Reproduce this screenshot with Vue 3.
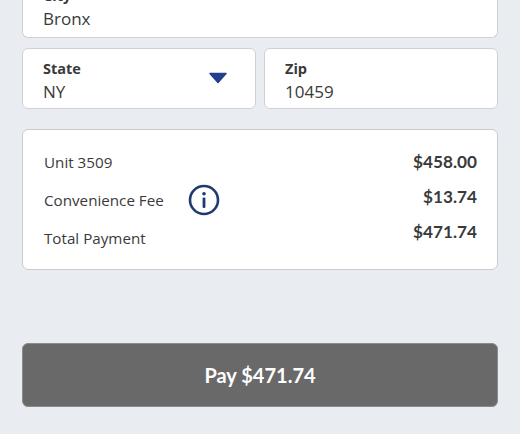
<script setup>
const rows = [
  { label: 'Unit 3509', amount: '$458.00' },
  { label: 'Convenience Fee', amount: '$13.74', info: true },
  { label: 'Total Payment', amount: '$471.74' },
];
</script>

<template>
  <div class="page">
    <div class="field city">
      <span class="field-label">City</span>
      <span class="field-value">Bronx</span>
    </div>
    <div class="field-row">
      <div class="field state">
        <div>
          <span class="field-label">State</span>
          <span class="field-value">NY</span>
        </div>
        <svg class="caret" width="20" height="12" viewBox="0 0 20 12">
          <path d="M2 1.5h16L10 10.5z" fill="#23408e" stroke="#23408e" stroke-width="1.5" stroke-linejoin="round" />
        </svg>
      </div>
      <div class="field">
        <span class="field-label">Zip</span>
        <span class="field-value">10459</span>
      </div>
    </div>
    <div class="summary">
      <div class="labels">
        <div v-for="row in rows" :key="row.label" class="summary-label">
          <span>{{ row.label }}</span>
          <svg v-if="row.info" class="info" width="32" height="32" viewBox="0 0 32 32">
            <circle cx="16" cy="16" r="14" fill="none" stroke="#1f3a73" stroke-width="2.6" />
            <circle cx="16" cy="9.8" r="1.8" fill="#1f3a73" />
            <rect x="14.6" y="13.6" width="2.8" height="10.4" rx="1" fill="#1f3a73" />
          </svg>
        </div>
      </div>
      <div class="amounts">
        <span v-for="row in rows" :key="row.label" class="amount">{{ row.amount }}</span>
      </div>
    </div>
    <button class="pay">Pay $471.74</button>
  </div>
</template>

<style scoped>
.page {
  box-sizing: border-box;
  width: 520px;
  height: 434px;
  overflow: hidden;
  display: flex;
  flex-direction: column;
  justify-content: flex-end;
  padding: 0 22px 27px;
  background: #e9edf2;
  font-family: "Open Sans", "Liberation Sans", sans-serif;
  color: #3a3a3a;
}

.field {
  box-sizing: border-box;
  height: 61px;
  padding: 10px 20px 0;
  background: #fff;
  border: 1px solid #cfd1d4;
  border-radius: 6px;
}

.city {
  flex: none;
  padding-top: 9px;
  border-top: none;
  border-radius: 0 0 6px 6px;
}

.field-label {
  display: block;
  font-size: 14.5px;
  line-height: 20px;
  font-weight: 700;
}

.field-value {
  display: block;
  font-size: 17px;
  line-height: 25px;
}

.field-row {
  flex: none;
  display: grid;
  grid-template-columns: 234px 234px;
  gap: 8px;
  margin-top: 10px;
}

.state {
  display: flex;
  justify-content: space-between;
  align-items: flex-start;
  padding-right: 27px;
}

.caret {
  margin-top: 13px;
}

.summary {
  flex: none;
  box-sizing: border-box;
  height: 141px;
  margin-top: 20px;
  padding: 21px 20px 0 21px;
  display: flex;
  justify-content: space-between;
  align-items: flex-start;
  background: #fff;
  border: 1px solid #c9cbce;
  border-radius: 6px;
}

.labels {
  display: flex;
  flex-direction: column;
  gap: 11px;
  font-size: 15.2px;
  line-height: 22px;
}

.summary-label {
  display: flex;
  align-items: center;
  gap: 24px;
}

.amounts {
  display: flex;
  flex-direction: column;
  align-items: flex-end;
  gap: 13px;
}

.amount {
  font-family: Lato, "Liberation Sans", sans-serif;
  font-size: 17.2px;
  line-height: 22px;
  font-weight: 700;
}

.pay {
  flex: none;
  height: 64px;
  margin-top: 73px;
  background: #696969;
  border: 1px solid #8b8b8b;
  border-radius: 6px;
  color: #fff;
  font-family: Lato, "Liberation Sans", sans-serif;
  font-size: 20px;
  font-weight: 700;
}
</style>
